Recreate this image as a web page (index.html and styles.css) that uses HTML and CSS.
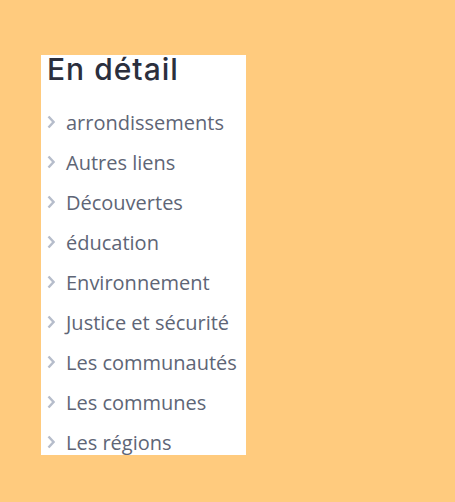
FILE: index.html
```html
<!DOCTYPE html>
<html lang="fr">
<head>
  <meta charset="UTF-8" />
  <meta name="viewport" content="width=device-width, initial-scale=1.0" />
  <title>En détail</title>
  <link rel="stylesheet" href="styles.css">
</head>
<body>
  <div class="panel">
    <h2>En détail</h2>
    <ul class="links">
      <li><svg class="chev" viewBox="0 0 8 14"><polyline points="1.5,1.5 6.5,7 1.5,12.5" /></svg><a href="#">arrondissements</a></li>
      <li><svg class="chev" viewBox="0 0 8 14"><polyline points="1.5,1.5 6.5,7 1.5,12.5" /></svg><a href="#">Autres liens</a></li>
      <li><svg class="chev" viewBox="0 0 8 14"><polyline points="1.5,1.5 6.5,7 1.5,12.5" /></svg><a href="#">Découvertes</a></li>
      <li><svg class="chev" viewBox="0 0 8 14"><polyline points="1.5,1.5 6.5,7 1.5,12.5" /></svg><a href="#">éducation</a></li>
      <li><svg class="chev" viewBox="0 0 8 14"><polyline points="1.5,1.5 6.5,7 1.5,12.5" /></svg><a href="#">Environnement</a></li>
      <li><svg class="chev" viewBox="0 0 8 14"><polyline points="1.5,1.5 6.5,7 1.5,12.5" /></svg><a href="#">Justice et sécurité</a></li>
      <li><svg class="chev" viewBox="0 0 8 14"><polyline points="1.5,1.5 6.5,7 1.5,12.5" /></svg><a href="#">Les communautés</a></li>
      <li><svg class="chev" viewBox="0 0 8 14"><polyline points="1.5,1.5 6.5,7 1.5,12.5" /></svg><a href="#">Les communes</a></li>
      <li><svg class="chev" viewBox="0 0 8 14"><polyline points="1.5,1.5 6.5,7 1.5,12.5" /></svg><a href="#">Les régions</a></li>
    </ul>
  </div>
</body>
</html>
```

FILE: styles.css
```css
body {
  margin: 0;
  background: #ffcb7e;
  font-family: "Open Sans", sans-serif;
}
.panel {
  margin: 55px 0 0 41px;
  width: 205px;
  height: 400px;
  background: white;
  padding-left: 6px;
  box-sizing: border-box;
}
h2 {
  margin: 0;
  font-family: Inter, sans-serif;
  font-weight: 500;
  font-size: 30px;
  line-height: 28px;
  color: #2b2f3d;
  letter-spacing: 1px;
}
.links {
  list-style: none;
  margin: 19px 0 0;
  padding: 0;
}
.links li {
  height: 40px;
  display: flex;
  align-items: center;
  white-space: nowrap;
}
.chev {
  width: 8px;
  height: 14px;
  margin-right: 11px;
  flex: none;
  fill: none;
  stroke: #b6bdcb;
  stroke-width: 2.4;
}
.links a {
  color: #5e6576;
  text-decoration: none;
  font-size: 20px;
}
```
